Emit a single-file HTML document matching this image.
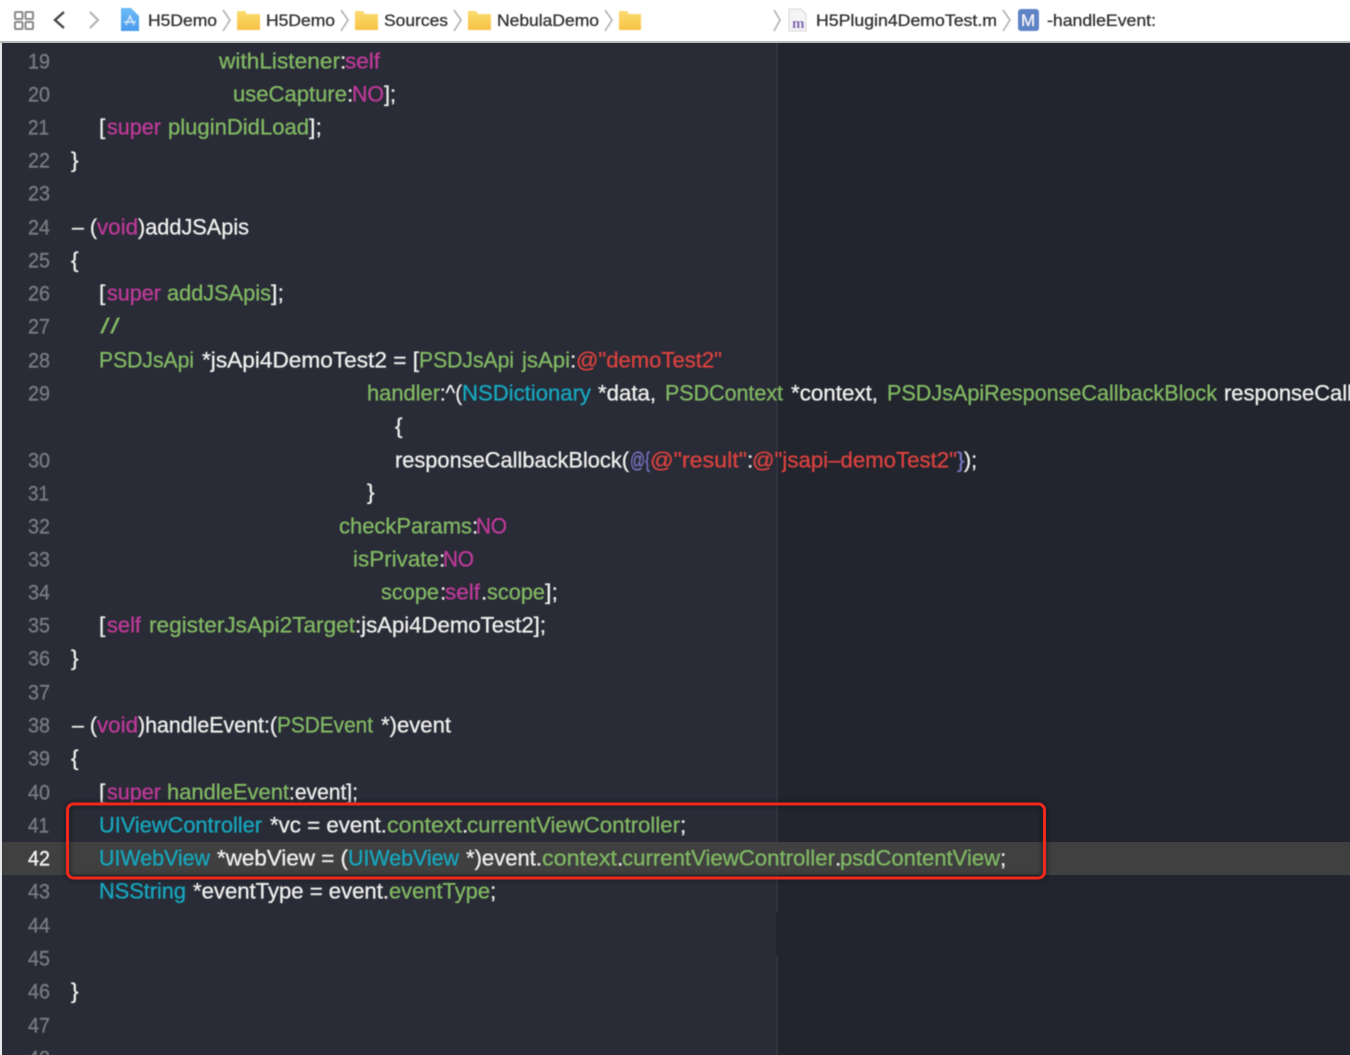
<!DOCTYPE html>
<html><head><meta charset="utf-8"><style>
html,body{margin:0;padding:0;width:1350px;height:1055px;overflow:hidden;background:#22252d}
svg{display:block}
text{font-family:"Liberation Sans",sans-serif;font-size:22.5px;white-space:pre}
.g{fill:#80b763;stroke:#80b763}.p{fill:#bd3a98;stroke:#bd3a98}.c{fill:#16a6bd;stroke:#16a6bd}.w{fill:#eeeeec;stroke:#eeeeec}.r{fill:#d8423f;stroke:#d8423f}.v{fill:#7775c2;stroke:#7775c2}
.code text{stroke-width:.35px}
.n text{fill:#77797f;stroke:#77797f;stroke-width:.4px;font-size:21px}
.b text{fill:#333335;stroke:#333335;stroke-width:.3px;font-size:16.5px}
.thin{stroke-width:0!important}
</style></head><body>
<svg width="1350" height="1055" viewBox="0 0 1350 1055" xmlns="http://www.w3.org/2000/svg">
<defs>
<filter id="s" x="-2%" y="-2%" width="104%" height="104%"><feGaussianBlur stdDeviation="0.5"/></filter>
<filter id="sh" x="-5%" y="-20%" width="110%" height="140%"><feGaussianBlur stdDeviation="2"/></filter>
<linearGradient id="f" x1="0" y1="0" x2="0" y2="1"><stop offset="0" stop-color="#fbdc70"/><stop offset="1" stop-color="#f8c243"/></linearGradient>
<linearGradient id="a" x1="0" y1="0" x2="0" y2="1"><stop offset="0" stop-color="#6cbcf7"/><stop offset="1" stop-color="#4a9aec"/></linearGradient>
</defs>
<rect width="1350" height="1055" fill="#22252d"/>
<rect x="0" y="42" width="776" height="1013" fill="#292b36"/>
<rect x="776" y="42" width="2" height="870" fill="#30323e"/>
<rect x="776" y="956" width="2" height="99" fill="#30323e"/>
<rect x="2" y="842" width="1348" height="33" fill="#3f403f"/>
<rect x="0" y="0" width="2" height="1055" fill="#e6e8ea"/>
<rect x="0" y="0" width="1350" height="41" fill="#fff"/>
<rect x="0" y="41" width="1350" height="2" fill="#b9b9b9"/>

<g filter="url(#s)">
<!-- toolbar icons -->
<g fill="none" stroke="#8a8a8a" stroke-width="2">
<rect x="15" y="12" width="7.5" height="7" rx="1"/><rect x="25.5" y="12" width="7.5" height="7" rx="1"/>
<rect x="15" y="22" width="7.5" height="7" rx="1"/><rect x="25.5" y="22" width="7.5" height="7" rx="1"/>
</g>
<path d="M64 12 L55 20 L64 28" fill="none" stroke="#444" stroke-width="2.4"/>
<path d="M90 12 L98 20 L90 28" fill="none" stroke="#b5b5b5" stroke-width="2.2"/>
<path d="M121 8 H131 L139 16 V31 H121 Z" fill="url(#a)"/>
<path d="M126 25 L130 16 L134 25 M124 22 H136" fill="none" stroke="#cfe6fb" stroke-width="1.4"/>
<g fill="none" stroke="#b0b0b0" stroke-width="1.6">
<path d="M223 10 L230 20 L223 31"/><path d="M341 10 L348 20 L341 31"/><path d="M454 10 L461 20 L454 31"/><path d="M605 10 L612 20 L605 31"/><path d="M774 10 L780 20 L774 31"/><path d="M1003 10 L1010 20 L1003 31"/>
</g>
<g fill="url(#f)">
<path d="M237 14 V12 Q237 11 238 11 H245 L247 14 H260 V30 H237 Z"/>
<path d="M355 14 V12 Q355 11 356 11 H363 L365 14 H378 V30 H355 Z"/>
<path d="M468 14 V12 Q468 11 469 11 H476 L478 14 H491 V30 H468 Z"/>
<path d="M619 14 V12 Q619 11 620 11 H627 L629 14 H641 V30 H619 Z"/>
</g>
<path d="M789 9 H801 L806 14 V31 H789 Z" fill="#f5f4f5" stroke="#d8d8d8"/>
<text x="792" y="28" fill="#7a55b5" style="font-family:'Liberation Serif',serif;font-size:15px;font-weight:bold">m</text>
<rect x="1018" y="9" width="21" height="22" rx="3" fill="#5f84c6"/>
<text x="1021" y="26" fill="#fff" style="font-size:17px">M</text>
<g class="b">
<text x="148" y="26" textLength="69" lengthAdjust="spacingAndGlyphs">H5Demo</text>
<text x="266" y="26" textLength="69" lengthAdjust="spacingAndGlyphs">H5Demo</text>
<text x="384" y="26" textLength="64" lengthAdjust="spacingAndGlyphs">Sources</text>
<text x="497" y="26" textLength="102" lengthAdjust="spacingAndGlyphs">NebulaDemo</text>
<text x="816" y="26" textLength="181" lengthAdjust="spacingAndGlyphs">H5Plugin4DemoTest.m</text>
<text x="1047" y="26" textLength="109" lengthAdjust="spacingAndGlyphs">-handleEvent:</text>
</g>

<!-- line numbers -->
<g class="n" transform="translate(0,-0.7)">
<text x="28" y="69" textLength="22" lengthAdjust="spacingAndGlyphs">19</text>
<text x="28" y="102" textLength="22" lengthAdjust="spacingAndGlyphs">20</text>
<text x="28" y="135" textLength="21" lengthAdjust="spacingAndGlyphs">21</text>
<text x="28" y="168" textLength="22" lengthAdjust="spacingAndGlyphs">22</text>
<text x="28" y="201" textLength="22" lengthAdjust="spacingAndGlyphs">23</text>
<text x="28" y="235" textLength="22" lengthAdjust="spacingAndGlyphs">24</text>
<text x="28" y="268" textLength="22" lengthAdjust="spacingAndGlyphs">25</text>
<text x="28" y="301" textLength="22" lengthAdjust="spacingAndGlyphs">26</text>
<text x="28" y="334" textLength="22" lengthAdjust="spacingAndGlyphs">27</text>
<text x="28" y="368" textLength="22" lengthAdjust="spacingAndGlyphs">28</text>
<text x="28" y="401" textLength="22" lengthAdjust="spacingAndGlyphs">29</text>
<text x="28" y="468" textLength="22" lengthAdjust="spacingAndGlyphs">30</text>
<text x="28" y="501" textLength="21" lengthAdjust="spacingAndGlyphs">31</text>
<text x="28" y="534" textLength="22" lengthAdjust="spacingAndGlyphs">32</text>
<text x="28" y="567" textLength="22" lengthAdjust="spacingAndGlyphs">33</text>
<text x="28" y="600" textLength="22" lengthAdjust="spacingAndGlyphs">34</text>
<text x="28" y="633" textLength="22" lengthAdjust="spacingAndGlyphs">35</text>
<text x="28" y="666" textLength="22" lengthAdjust="spacingAndGlyphs">36</text>
<text x="28" y="700" textLength="22" lengthAdjust="spacingAndGlyphs">37</text>
<text x="28" y="733" textLength="22" lengthAdjust="spacingAndGlyphs">38</text>
<text x="28" y="766" textLength="22" lengthAdjust="spacingAndGlyphs">39</text>
<text x="28" y="800" textLength="22" lengthAdjust="spacingAndGlyphs">40</text>
<text x="28" y="833" textLength="21" lengthAdjust="spacingAndGlyphs">41</text>
<text x="28" y="866" textLength="22" lengthAdjust="spacingAndGlyphs" style="fill:#f0f0ee;stroke:#f0f0ee">42</text>
<text x="28" y="899" textLength="22" lengthAdjust="spacingAndGlyphs">43</text>
<text x="28" y="933" textLength="22" lengthAdjust="spacingAndGlyphs">44</text>
<text x="28" y="966" textLength="22" lengthAdjust="spacingAndGlyphs">45</text>
<text x="28" y="999" textLength="22" lengthAdjust="spacingAndGlyphs">46</text>
<text x="28" y="1033" textLength="22" lengthAdjust="spacingAndGlyphs">47</text>
<text x="28" y="1066" textLength="22" lengthAdjust="spacingAndGlyphs">48</text>
</g>

<!-- code -->
<g class="code" transform="translate(0,-0.7)">
<text class="g" x="219" y="69" textLength="121" lengthAdjust="spacingAndGlyphs">withListener</text>
<text class="w" x="340" y="69">:</text>
<text class="p" x="345" y="69" textLength="35" lengthAdjust="spacingAndGlyphs">self</text>

<text class="g" x="233" y="102" textLength="114" lengthAdjust="spacingAndGlyphs">useCapture</text>
<text class="w" x="347" y="102">:</text>
<text class="p" x="352" y="102" textLength="32" lengthAdjust="spacingAndGlyphs">NO</text>
<text class="w" x="384" y="102" textLength="12" lengthAdjust="spacingAndGlyphs">];</text>

<text class="w" x="99" y="135">[</text>
<text class="p" x="107" y="135" textLength="54" lengthAdjust="spacingAndGlyphs">super</text>
<text class="g" x="168" y="135" textLength="141" lengthAdjust="spacingAndGlyphs">pluginDidLoad</text>
<text class="w" x="309" y="135" textLength="13" lengthAdjust="spacingAndGlyphs">];</text>

<text class="w" x="71" y="168">}</text>

<text class="w" x="72" y="235" textLength="25" lengthAdjust="spacingAndGlyphs">– (</text>
<text class="p" x="97" y="235" textLength="41" lengthAdjust="spacingAndGlyphs">void</text>
<text class="w" x="138" y="235" textLength="111" lengthAdjust="spacingAndGlyphs">)addJSApis</text>

<text class="w" x="71" y="268">{</text>

<text class="w" x="99" y="301">[</text>
<text class="p" x="107" y="301" textLength="54" lengthAdjust="spacingAndGlyphs">super</text>
<text class="g" x="167" y="301" textLength="104" lengthAdjust="spacingAndGlyphs">addJSApis</text>
<text class="w" x="271" y="301" textLength="13" lengthAdjust="spacingAndGlyphs">];</text>

<text class="g thin" x="100" y="334" textLength="20" lengthAdjust="spacingAndGlyphs">//</text>

<text class="g" x="99" y="368" textLength="95" lengthAdjust="spacingAndGlyphs">PSDJsApi</text>
<text class="w" x="202" y="368" textLength="217" lengthAdjust="spacingAndGlyphs">*jsApi4DemoTest2 = [</text>
<text class="g" x="419" y="368" textLength="95" lengthAdjust="spacingAndGlyphs">PSDJsApi</text>
<text class="g" x="522" y="368" textLength="48" lengthAdjust="spacingAndGlyphs">jsApi</text>
<text class="w" x="570" y="368">:</text>
<text class="r" x="576" y="368" textLength="146" lengthAdjust="spacingAndGlyphs">@"demoTest2"</text>

<text class="g" x="367" y="401" textLength="73" lengthAdjust="spacingAndGlyphs">handler</text>
<text class="w" x="440" y="401" textLength="22" lengthAdjust="spacingAndGlyphs">:^(</text>
<text class="c" x="462" y="401" textLength="129" lengthAdjust="spacingAndGlyphs">NSDictionary</text>
<text class="w" x="598" y="401" textLength="58" lengthAdjust="spacingAndGlyphs">*data,</text>
<text class="g" x="665" y="401" textLength="118" lengthAdjust="spacingAndGlyphs">PSDContext</text>
<text class="w" x="791" y="401" textLength="87" lengthAdjust="spacingAndGlyphs">*context,</text>
<text class="g" x="887" y="401" textLength="330" lengthAdjust="spacingAndGlyphs">PSDJsApiResponseCallbackBlock</text>
<text class="w" x="1224" y="401" textLength="128" lengthAdjust="spacingAndGlyphs">responseCall</text>

<text class="w" x="395" y="434">{</text>

<text class="w" x="395" y="468" textLength="234" lengthAdjust="spacingAndGlyphs">responseCallbackBlock(</text>
<text class="v" x="630" y="468" textLength="20" lengthAdjust="spacingAndGlyphs">@{</text>
<text class="r" x="650" y="468" textLength="97" lengthAdjust="spacingAndGlyphs">@"result"</text>
<text class="w" x="747" y="468">:</text>
<text class="r" x="752" y="468" textLength="205" lengthAdjust="spacingAndGlyphs">@"jsapi–demoTest2"</text>
<text class="v" x="957" y="468">}</text>
<text class="w" x="964" y="468" textLength="13" lengthAdjust="spacingAndGlyphs">);</text>

<text class="w" x="367" y="500">}</text>

<text class="g" x="339" y="534" textLength="133" lengthAdjust="spacingAndGlyphs">checkParams</text>
<text class="w" x="472" y="534">:</text>
<text class="p" x="476" y="534" textLength="31" lengthAdjust="spacingAndGlyphs">NO</text>

<text class="g" x="353" y="567" textLength="86" lengthAdjust="spacingAndGlyphs">isPrivate</text>
<text class="w" x="439" y="567">:</text>
<text class="p" x="443" y="567" textLength="31" lengthAdjust="spacingAndGlyphs">NO</text>

<text class="g" x="381" y="600" textLength="58" lengthAdjust="spacingAndGlyphs">scope</text>
<text class="w" x="440" y="600">:</text>
<text class="p" x="445" y="600" textLength="35" lengthAdjust="spacingAndGlyphs">self</text>
<text class="w" x="481" y="600">.</text>
<text class="g" x="487" y="600" textLength="58" lengthAdjust="spacingAndGlyphs">scope</text>
<text class="w" x="545" y="600" textLength="13" lengthAdjust="spacingAndGlyphs">];</text>

<text class="w" x="99" y="633">[</text>
<text class="p" x="107" y="633" textLength="34" lengthAdjust="spacingAndGlyphs">self</text>
<text class="g" x="149" y="633" textLength="206" lengthAdjust="spacingAndGlyphs">registerJsApi2Target</text>
<text class="w" x="355" y="633" textLength="191" lengthAdjust="spacingAndGlyphs">:jsApi4DemoTest2];</text>

<text class="w" x="71" y="666">}</text>

<text class="w" x="72" y="733" textLength="25" lengthAdjust="spacingAndGlyphs">– (</text>
<text class="p" x="97" y="733" textLength="41" lengthAdjust="spacingAndGlyphs">void</text>
<text class="w" x="138" y="733" textLength="139" lengthAdjust="spacingAndGlyphs">)handleEvent:(</text>
<text class="g" x="277" y="733" textLength="96" lengthAdjust="spacingAndGlyphs">PSDEvent</text>
<text class="w" x="381" y="733" textLength="70" lengthAdjust="spacingAndGlyphs">*)event</text>

<text class="w" x="71" y="766">{</text>

<text class="w" x="99" y="800">[</text>
<text class="p" x="107" y="800" textLength="54" lengthAdjust="spacingAndGlyphs">super</text>
<text class="g" x="167" y="800" textLength="122" lengthAdjust="spacingAndGlyphs">handleEvent</text>
<text class="w" x="289" y="800" textLength="69" lengthAdjust="spacingAndGlyphs">:event];</text>

<text class="c" x="99" y="833" textLength="163" lengthAdjust="spacingAndGlyphs">UIViewController</text>
<text class="w" x="270" y="833" textLength="117" lengthAdjust="spacingAndGlyphs">*vc = event.</text>
<text class="g" x="387" y="833" textLength="75" lengthAdjust="spacingAndGlyphs">context</text>
<text class="w" x="462" y="833">.</text>
<text class="g" x="467" y="833" textLength="213" lengthAdjust="spacingAndGlyphs">currentViewController</text>
<text class="w" x="680" y="833">;</text>

<text class="c" x="99" y="866" textLength="111" lengthAdjust="spacingAndGlyphs">UIWebView</text>
<text class="w" x="217" y="866" textLength="131" lengthAdjust="spacingAndGlyphs">*webView = (</text>
<text class="c" x="348" y="866" textLength="111" lengthAdjust="spacingAndGlyphs">UIWebView</text>
<text class="w" x="466" y="866" textLength="76" lengthAdjust="spacingAndGlyphs">*)event.</text>
<text class="g" x="542" y="866" textLength="75" lengthAdjust="spacingAndGlyphs">context</text>
<text class="w" x="617" y="866">.</text>
<text class="g" x="622" y="866" textLength="213" lengthAdjust="spacingAndGlyphs">currentViewController</text>
<text class="w" x="835" y="866">.</text>
<text class="g" x="840" y="866" textLength="160" lengthAdjust="spacingAndGlyphs">psdContentView</text>
<text class="w" x="1000" y="866">;</text>

<text class="c" x="99" y="899" textLength="87" lengthAdjust="spacingAndGlyphs">NSString</text>
<text class="w" x="193" y="899" textLength="196" lengthAdjust="spacingAndGlyphs">*eventType = event.</text>
<text class="g" x="389" y="899" textLength="101" lengthAdjust="spacingAndGlyphs">eventType</text>
<text class="w" x="490" y="899">;</text>

<text class="w" x="71" y="999">}</text>
</g>
</g>

<!-- red annotation -->
<rect x="67.5" y="804" width="977" height="74" rx="6" fill="none" stroke="#0d1520" stroke-width="5" opacity=".55" filter="url(#sh)"/>
<rect x="67.5" y="804" width="977" height="74" rx="6" fill="none" stroke="#f1291c" stroke-width="3"/>
</svg>
</body></html>
